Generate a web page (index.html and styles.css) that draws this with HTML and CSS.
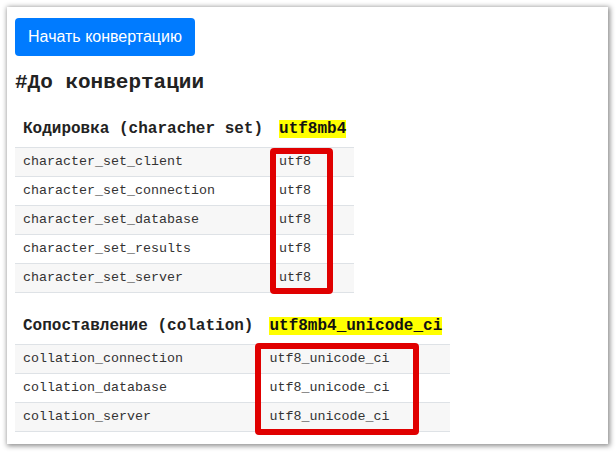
FILE: index.html
```html
<!DOCTYPE html>
<html>
<head>
<meta charset="utf-8">
<link rel="stylesheet" href="styles.css">
</head>
<body>
<div class="panel">
  <button class="btn">Начать конвертацию</button>
  <h2 class="title">#До конвертации</h2>
  <table class="vars">
    <thead>
      <tr><th>Кодировка (characher set)</th><th><mark>utf8mb4</mark></th></tr>
    </thead>
    <tbody>
      <tr><td>character_set_client</td><td>utf8</td></tr>
      <tr><td>character_set_connection</td><td>utf8</td></tr>
      <tr><td>character_set_database</td><td>utf8</td></tr>
      <tr><td>character_set_results</td><td>utf8</td></tr>
      <tr><td>character_set_server</td><td>utf8</td></tr>
    </tbody>
  </table>
  <table class="vars">
    <thead>
      <tr><th>Сопоставление (colation)</th><th><mark>utf8mb4_unicode_ci</mark></th></tr>
    </thead>
    <tbody>
      <tr><td>collation_connection</td><td>utf8_unicode_ci</td></tr>
      <tr><td>collation_database</td><td>utf8_unicode_ci</td></tr>
      <tr><td>collation_server</td><td>utf8_unicode_ci</td></tr>
    </tbody>
  </table>
  <div class="mark-box box-charset"></div>
  <div class="mark-box box-collation"></div>
</div>
</body>
</html>
```

FILE: styles.css
```css
html, body {
  margin: 0;
  padding: 0;
  background: #ffffff;
}
body {
  padding: 7px 8px 8px 7px;
}
.panel {
  position: relative;
  box-sizing: border-box;
  width: 601px;
  height: 437px;
  background: #ffffff;
  box-shadow: 1px 1px 5px 1px rgba(0, 0, 0, 0.45);
  padding: 11px 8px 0 8px;
}
.btn {
  display: block;
  width: 180px;
  height: 38px;
  border: none;
  border-radius: 4px;
  background: #007bff;
  color: #ffffff;
  font-family: "Liberation Sans", Arial, sans-serif;
  font-size: 16px;
  padding: 0;
  text-align: center;
}
.title {
  margin: 15px 0 16px 0;
  font-family: "Liberation Mono", "Courier New", monospace;
  font-weight: bold;
  font-size: 21px;
  line-height: 24px;
  color: #222222;
}
.vars {
  border-collapse: collapse;
  margin-bottom: 15px;
  font-family: "Liberation Mono", "Courier New", monospace;
}
.vars th {
  font-size: 16px;
  font-weight: bold;
  line-height: 20px;
  padding: 8px 8px;
  text-align: left;
  color: #222222;
  border-bottom: 1px solid #dee2e6;
}
.vars td {
  font-size: 13.33px;
  line-height: 16px;
  padding: 6px 8px;
  color: #333333;
  border-bottom: 1px solid #dee2e6;
}
.vars tbody tr:nth-child(odd) {
  background: #f7f7f7;
}
.vars mark {
  background: #ffff00;
  color: #111111;
  padding: 0;
}
.mark-box {
  position: absolute;
  box-sizing: border-box;
  border: 6px solid #e00000;
  border-radius: 4px;
}
.box-charset {
  left: 263px;
  top: 141px;
  width: 63px;
  height: 146px;
}
.box-collation {
  left: 248px;
  top: 336px;
  width: 164px;
  height: 92px;
}
```
